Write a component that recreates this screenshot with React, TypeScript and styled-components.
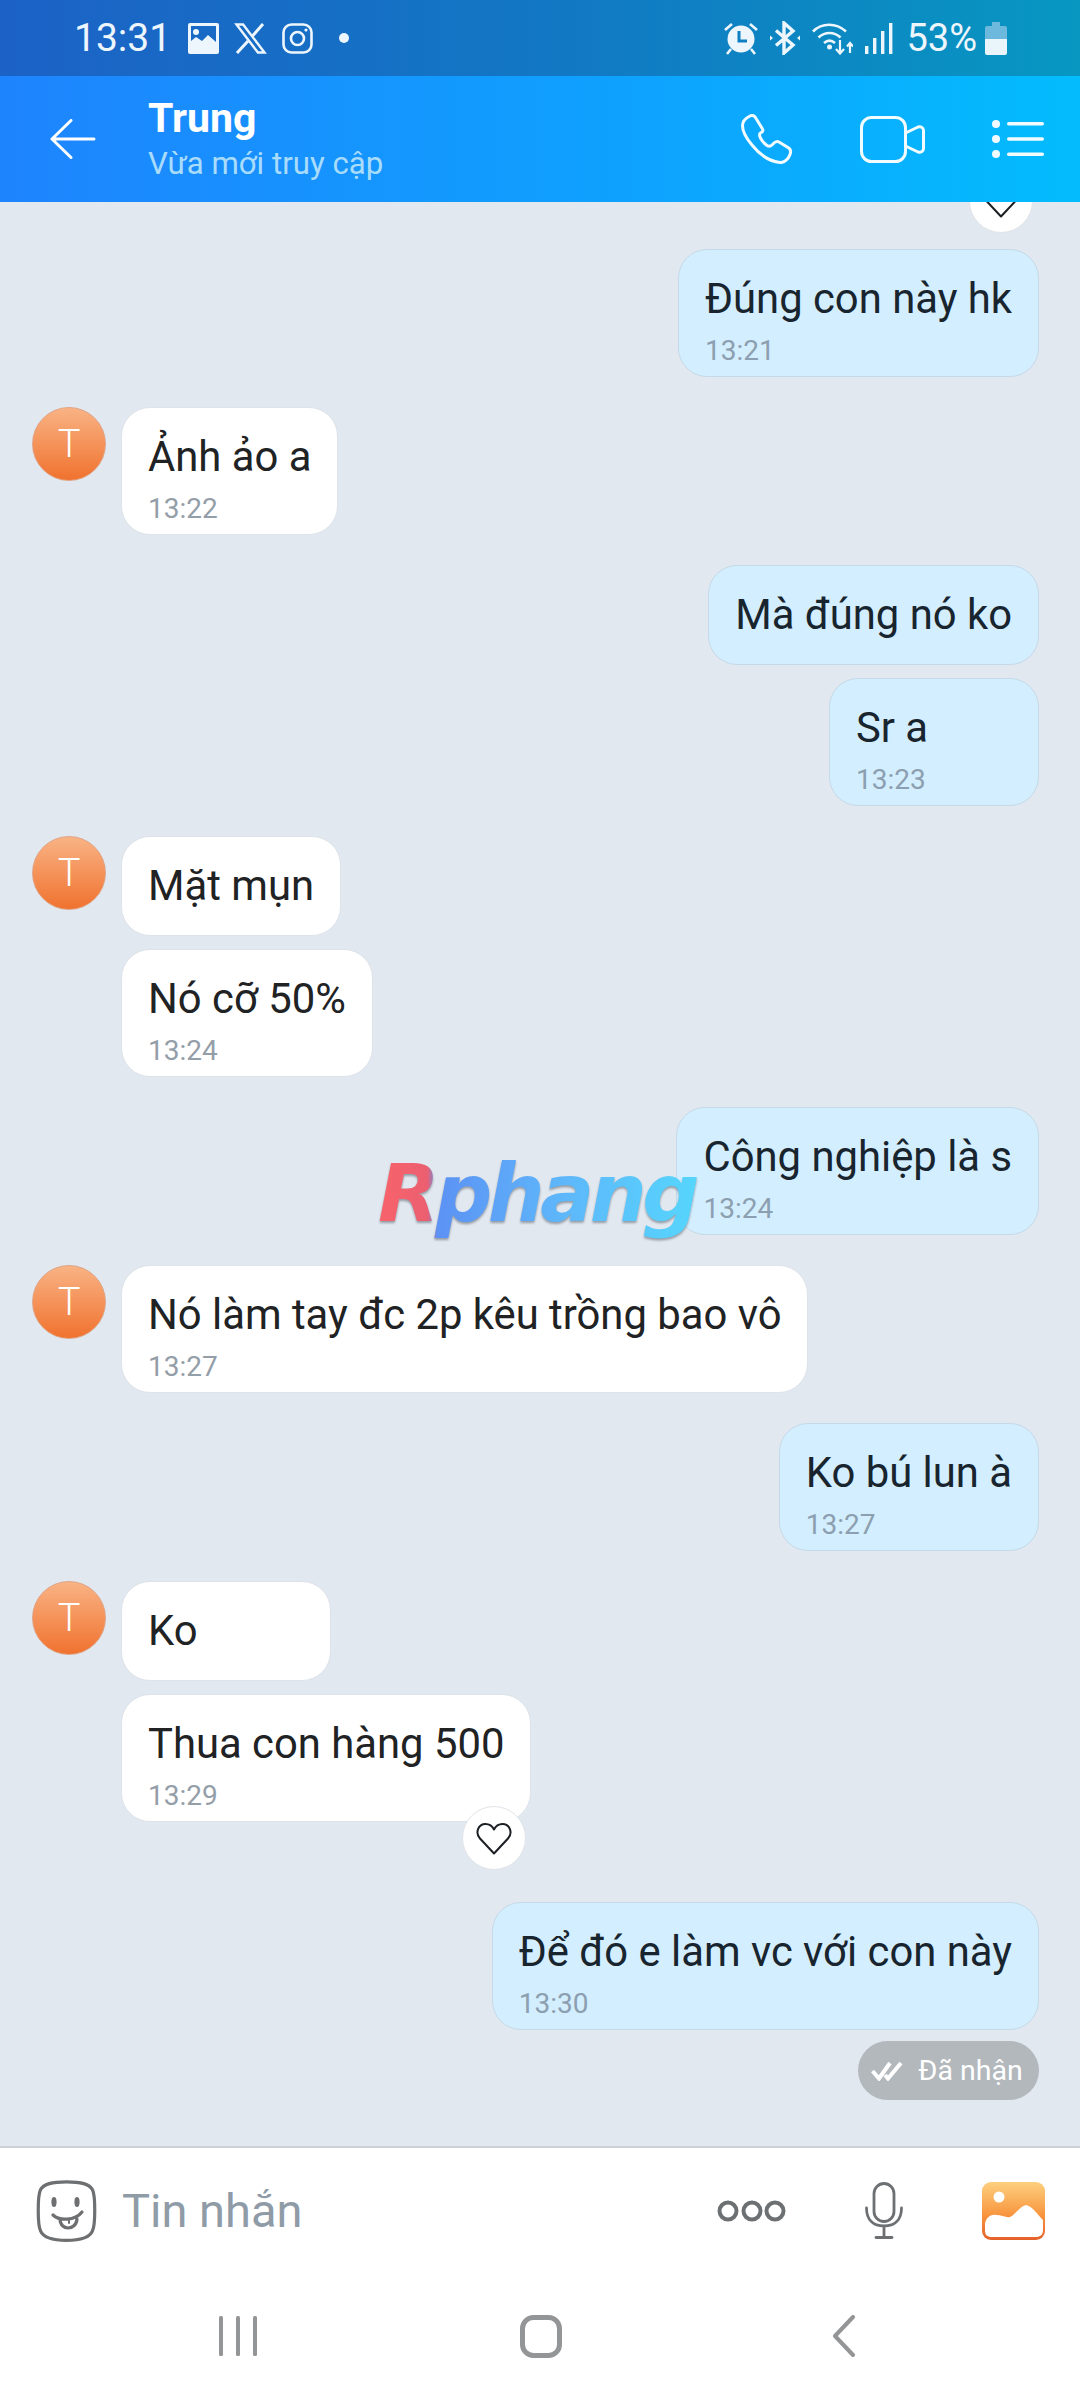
import React from "react";
import styled, { createGlobalStyle } from "styled-components";

interface Message {
  id: number;
  text: string;
  time?: string;
  reaction?: boolean;
}

interface Group {
  id: number;
  mine: boolean;
  messages: Message[];
  delivered?: boolean;
  pushTop?: number;
}

const groups: Group[] = [
  { id: 1, mine: true, messages: [{ id: 1, text: "Đúng con này hk", time: "13:21" }] },
  { id: 2, mine: false, messages: [{ id: 2, text: "Ảnh ảo a", time: "13:22" }] },
  {
    id: 3,
    mine: true,
    messages: [
      { id: 3, text: "Mà đúng nó ko" },
      { id: 4, text: "Sr a", time: "13:23" },
    ],
  },
  {
    id: 4,
    mine: false,
    messages: [
      { id: 5, text: "Mặt mụn" },
      { id: 6, text: "Nó cỡ 50%", time: "13:24" },
    ],
  },
  { id: 5, mine: true, messages: [{ id: 7, text: "Công nghiệp là s", time: "13:24" }] },
  { id: 6, mine: false, messages: [{ id: 8, text: "Nó làm tay đc 2p kêu trồng bao vô", time: "13:27" }] },
  { id: 7, mine: true, messages: [{ id: 9, text: "Ko bú lun à", time: "13:27" }] },
  {
    id: 8,
    mine: false,
    messages: [
      { id: 10, text: "Ko" },
      { id: 11, text: "Thua con hàng 500", time: "13:29", reaction: true },
    ],
  },
  {
    id: 9,
    mine: true,
    pushTop: 50,
    delivered: true,
    messages: [{ id: 12, text: "Để đó e làm vc với con này", time: "13:30" }],
  },
];

const GlobalStyle = createGlobalStyle`
  html, body {
    margin: 0;
    padding: 0;
    background: #fff;
    font-family: Roboto, "Liberation Sans", sans-serif;
  }
  * { box-sizing: border-box; }
`;

const Screen = styled.div`
  width: 1080px;
  height: 2400px;
  display: flex;
  flex-direction: column;
  overflow: hidden;
  background: #fff;
`;

const StatusBar = styled.div`
  height: 76px;
  flex-shrink: 0;
  display: flex;
  align-items: center;
  padding: 0 73px 0 74px;
  background: linear-gradient(90deg, #1c62c6 0%, #1277c4 50%, #0797c1 100%);
  color: #eef6fd;
`;

const StatusTime = styled.span`
  font-size: 39px;
  line-height: 76px;
  margin-right: 17px;
`;

const StatusIcons = styled.div<{ $gap: number }>`
  display: flex;
  align-items: center;
  gap: ${(p) => p.$gap}px;
`;

const StatusDot = styled.span`
  width: 10px;
  height: 10px;
  border-radius: 50%;
  background: #eef6fd;
  margin-left: 26px;
`;

const StatusRight = styled.div`
  margin-left: auto;
  display: flex;
  align-items: center;
  gap: 12px;
`;

const Percent = styled.span`
  font-size: 38px;
  line-height: 76px;
  margin: 0 -4px 0 1px;
`;

const Header = styled.header`
  height: 126px;
  flex-shrink: 0;
  display: flex;
  align-items: center;
  padding: 0 36px 0 50px;
  color: #fff;
  background: linear-gradient(90deg, #1e84fe 0%, #0fa0fe 55%, #03bcfd 100%);
`;

const Peer = styled.div`
  margin-left: 52px;
  display: flex;
  flex-direction: column;
`;

const PeerName = styled.div`
  font-size: 41px;
  line-height: 48px;
  font-weight: 700;
  margin-top: -1px;
`;

const PeerStatus = styled.div`
  font-size: 31.2px;
  line-height: 40px;
  margin-top: 2px;
  color: #a9dcfb;
`;

const HeaderActions = styled.div`
  margin-left: auto;
  display: flex;
  align-items: center;
  gap: 67px;
`;

const Chat = styled.main`
  position: relative;
  flex: 1;
  min-height: 0;
  overflow: hidden;
  display: flex;
  flex-direction: column;
  gap: 30px;
  padding: 47px 41px 0 32px;
  background: #e2e8f0;
`;

const Row = styled.div<{ $mine: boolean; $pushTop?: number }>`
  display: flex;
  gap: 15px;
  justify-content: ${(p) => (p.$mine ? "flex-end" : "flex-start")};
  margin-top: ${(p) => p.$pushTop ?? 0}px;
`;

const Avatar = styled.div`
  width: 74px;
  height: 74px;
  flex-shrink: 0;
  border-radius: 50%;
  display: flex;
  align-items: center;
  justify-content: center;
  color: #fff;
  font-size: 38px;
  font-weight: 300;
  background: linear-gradient(180deg, #f9b384 0%, #f0722f 100%);
  border: 1px solid #e0a485;
`;

const Stack = styled.div<{ $mine: boolean }>`
  display: flex;
  flex-direction: column;
  gap: 13px;
  align-items: ${(p) => (p.$mine ? "flex-end" : "flex-start")};
`;

const Bubble = styled.div<{ $mine: boolean }>`
  position: relative;
  min-width: 210px;
  padding: 25px 26px 11px;
  border-radius: 29px;
  background: ${(p) => (p.$mine ? "#d3eefe" : "#ffffff")};
  border: 1px solid ${(p) => (p.$mine ? "#c5d9e8" : "#dde3e9")};
`;

const BubbleText = styled.div<{ $mine: boolean }>`
  font-size: 41.8px;
  line-height: 48px;
  color: ${(p) => (p.$mine ? "#18242e" : "#202224")};
  white-space: nowrap;
  margin-bottom: 14px;
`;

const BubbleTime = styled.div<{ $mine: boolean }>`
  font-size: 28px;
  line-height: 28px;
  color: ${(p) => (p.$mine ? "#8c9fb0" : "#949ea8")};
`;

const Reaction = styled.div`
  position: absolute;
  right: 4px;
  bottom: -49px;
  width: 64px;
  height: 64px;
  border-radius: 50%;
  background: #fff;
  border: 1px solid #e1e4e8;
  display: flex;
  align-items: center;
  justify-content: center;
`;

const ClippedReaction = styled(Reaction)`
  top: -33px;
  right: 47px;
  bottom: auto;
`;

const DeliveredPill = styled.div`
  height: 59px;
  width: 181px;
  border-radius: 30px;
  background: #b3b8bd;
  color: #fff;
  font-size: 28.5px;
  display: flex;
  align-items: center;
  justify-content: center;
  gap: 15px;
  margin-top: -2px;
  padding-right: 3px;
`;

const Watermark = styled.div`
  position: absolute;
  left: 378px;
  top: 937px;
  font-family: "DejaVu Sans", sans-serif;
  font-size: 80px;
  line-height: 110px;
  font-weight: 700;
  font-style: italic;
  letter-spacing: -4.5px;
  padding-right: 12px;
  color: transparent;
  background: linear-gradient(90deg, #f8636a 0%, #ec5f70 15%, #5c92f4 18%, #5eb6fa 55%, #55d8fd 100%);
  -webkit-background-clip: text;
  background-clip: text;
  filter: drop-shadow(0 2px 1px rgba(70, 80, 90, 0.5));
`;

const Composer = styled.div`
  height: 124px;
  flex-shrink: 0;
  display: flex;
  align-items: center;
  padding: 3px 35px 0 36px;
  background: #fff;
  border-top: 2px solid #ccd1d6;
`;

const Placeholder = styled.span`
  margin-left: 25px;
  font-size: 47px;
  color: #8f9ba6;
`;

const ComposerActions = styled.div`
  margin-left: auto;
  display: flex;
  align-items: center;
  gap: 79px;
`;

const NavBar = styled.nav`
  height: 130px;
  flex-shrink: 0;
  display: grid;
  grid-template-columns: 301px 312px auto;
  align-items: start;
  padding: 45px 0 0 219px;
  background: #fff;
`;

const Svg = styled.svg`
  display: block;
  flex-shrink: 0;
`;

const ImageGlyph = () => (
  <Svg width="31" height="31" viewBox="0 0 31 31">
    <path
      fill="#eef6fd"
      fillRule="evenodd"
      d="M2 0h27a2 2 0 0 1 2 2v27a2 2 0 0 1-2 2H2a2 2 0 0 1-2-2V2a2 2 0 0 1 2-2Zm1 3v15l5-4 6 4 6-6 8 7V3Z"
    />
    <circle cx="8" cy="9" r="3" fill="#eef6fd" />
  </Svg>
);

const XGlyph = () => (
  <Svg width="33" height="31" viewBox="0 0 33 31" fill="none" stroke="#eef6fd">
    <path strokeWidth="2.4" d="M2.5 1.5h6.6l21.4 28h-6.6Z" />
    <path strokeWidth="3" d="M29 1 18.5 13M14 18 3 30" />
  </Svg>
);

const InstagramGlyph = () => (
  <Svg width="31" height="31" viewBox="0 0 31 31" fill="none" stroke="#eef6fd" strokeWidth="2.6">
    <rect x="1.5" y="1.5" width="28" height="28" rx="8" />
    <circle cx="15.5" cy="15.5" r="6.5" />
    <circle cx="24" cy="7" r="1.6" fill="#eef6fd" stroke="none" />
  </Svg>
);

const AlarmGlyph = () => (
  <Svg width="34" height="33" viewBox="0 0 34 33">
    <circle cx="17" cy="17" r="13.5" fill="#eef6fd" />
    <path d="M15 9v10h8" fill="none" stroke="#0f7fc3" strokeWidth="3" />
    <path d="M1 8 8 2M33 8l-7-6M7 27l-4 5M27 27l4 5" stroke="#eef6fd" strokeWidth="2.6" fill="none" />
  </Svg>
);

const BluetoothGlyph = () => (
  <Svg width="30" height="34" viewBox="0 0 30 34" fill="none">
    <path d="M6 9.5 23 24l-9 8V2l9 8L6 24.5" stroke="#eef6fd" strokeWidth="3.4" />
    <path d="M0 14.5 3 17l-3 2.5ZM30 14.5 27 17l3 2.5Z" fill="#eef6fd" />
  </Svg>
);

const WifiGlyph = () => (
  <Svg width="41" height="33" viewBox="0 0 41 33" fill="none" stroke="#eef6fd" strokeWidth="2.6">
    <path d="M1 9.5C10 .5 24 .5 34 9.5M6.5 15.5C13 9.5 22 9.5 28.5 15.5M12 21c3.500-3 7.500-3 11 0" />
    <circle cx="17.500" cy="25" r="2.500" fill="#eef6fd" stroke="none" />
    <path strokeWidth="2.200" d="M28 18v13M24 27l4 4.500 4-4.500M38 31V21M35 24.500l3-3.500 3 3.500" />
  </Svg>
);

const SignalGlyph = () => (
  <Svg width="28" height="31" viewBox="0 0 28 31" fill="#eef6fd">
    <rect x="0" y="23" width="3.400" height="8" />
    <rect x="8" y="15" width="3.400" height="16" />
    <rect x="16" y="8" width="3.400" height="23" />
    <rect x="24" y="0" width="3.400" height="31" />
  </Svg>
);

const BatteryGlyph = () => (
  <Svg width="22" height="33" viewBox="0 0 22 33">
    <path d="M7 0h8v4h5a2 2 0 0 1 2 2v11H0V6a2 2 0 0 1 2-2h5Z" fill="#6cb9dd" />
    <path d="M0 17h22v14a2 2 0 0 1-2 2H2a2 2 0 0 1-2-2Z" fill="#eaf5fb" />
  </Svg>
);

const BackGlyph = () => (
  <Svg width="46" height="40" viewBox="0 0 46 40" fill="none" stroke="#fff" strokeWidth="3" strokeLinecap="round" strokeLinejoin="round">
    <path d="M44 20H2M21 1.500 2 20l19 18.500" />
  </Svg>
);

const PhoneGlyph = () => (
  <Svg width="52" height="50" viewBox="0 0 52 50" fill="none" stroke="#f2fbff" strokeWidth="3">
    <path d="M9 2c2-1 4-.5 5.500 1.500l7 11.500c1 1.500 0 3-2 4-1.500 1-1 3 0 5 1.500 3 3.500 5.500 6.500 7.500 2 1.500 4 .5 5.500-1 2-2.500 4.500-3.500 6.500-2.500l9 5.500c2.500 1.500 3 4.500 2 7-1.500 4.500-6 8.500-10 8-10-1-20-7.500-28-17.500C5 24 1.500 17 1.500 11.500 1.500 7.500 5 4 9 2Z" />
  </Svg>
);

const VideoGlyph = () => (
  <Svg width="65" height="47" viewBox="0 0 65 47" fill="none" stroke="#f2fbff" strokeWidth="3" strokeLinejoin="round">
    <rect x="1.500" y="1.500" width="44" height="44" rx="10" />
    <path d="M45.500 17 58 11c2.500-1 5.500.5 5.500 3.500v18c0 3-3 4.500-5.500 3.500l-12.500-6" />
  </Svg>
);

const ListGlyph = () => (
  <Svg width="52" height="38" viewBox="0 0 52 38" fill="#f2fbff">
    <circle cx="4" cy="4" r="4" />
    <circle cx="4" cy="19" r="4" />
    <circle cx="4" cy="34" r="4" />
    <rect x="15" y="2" width="37" height="3.400" rx="1.700" />
    <rect x="15" y="17.300" width="37" height="3.400" rx="1.700" />
    <rect x="15" y="32.600" width="37" height="3.400" rx="1.700" />
  </Svg>
);

const HeartGlyph = () => (
  <Svg width="36" height="33" viewBox="0 0 36 33" fill="none" stroke="#1b1f24" strokeWidth="2" strokeLinejoin="round">
    <path d="M18 31.500 4 16.500C-1 11 2 2 9.500 2c3.700 0 6.800 2 8.500 5.500C19.700 4 22.800 2 26.500 2 34 2 37 11 32 16.500Z" />
  </Svg>
);

const DoubleCheckGlyph = () => (
  <Svg width="32" height="20" viewBox="0 0 32 20" fill="none" stroke="#fff" strokeWidth="4">
    <path d="M1.500 10 8 17.500 19 2M14 14l3 3.500L30 2" />
  </Svg>
);

const SmileyGlyph = () => (
  <Svg width="61" height="62" viewBox="0 0 61 62" fill="none" stroke="#6d6f71" strokeWidth="3.200" strokeLinecap="round">
    <path d="M30.500 1.800c15 0 23 2 26 8 3 6 3 35 0 41-3 7-12 9.500-26 9.500s-23-2.500-26-9.500c-3-6-3-35 0-41 3-6 11-8 26-8Z" />
    <ellipse cx="18" cy="22" rx="2.600" ry="5" fill="#6d6f71" stroke="none" />
    <ellipse cx="41" cy="22" rx="2.600" ry="5" fill="#6d6f71" stroke="none" />
    <path d="M17 35c6 6 22 6 29-3M24 39c0 12 16 12 17 0" />
    <path d="M33 39v4" strokeWidth="2" />
  </Svg>
);

const DotsGlyph = () => (
  <Svg width="69" height="24" viewBox="0 0 69 24" fill="none" stroke="#6d7072" strokeWidth="4">
    <circle cx="11" cy="12" r="8.500" />
    <circle cx="35" cy="12" r="8.500" />
    <circle cx="58" cy="12" r="8.500" />
  </Svg>
);

const MicGlyph = () => (
  <Svg width="38" height="57" viewBox="0 0 38 57" fill="none" stroke="#6d7072" strokeWidth="2.800" strokeLinecap="round">
    <rect x="9" y="1.500" width="20" height="38" rx="10" />
    <path d="M1.500 26c0 12 7 18 17.500 18s17.500-6 17.500-18M19 44v11M11 55.500h16" />
  </Svg>
);

const GalleryGlyph = () => (
  <Svg width="63" height="58" viewBox="0 0 63 58">
    <defs>
      <linearGradient id="galleryFill" x1="0" y1="0" x2="0" y2="1">
        <stop offset="0" stopColor="#fdd07e" />
        <stop offset="0.6" stopColor="#f8923c" />
        <stop offset="1" stopColor="#e4602a" />
      </linearGradient>
    </defs>
    <rect width="63" height="58" rx="9" fill="url(#galleryFill)" />
    <circle cx="17" cy="15" r="5.500" fill="#fff" />
    <path d="M3 43C3 37 8 32 14 33c6 0 10 3 14 2 5-2 10-11 16-12 6 1 12 10 17 15v10c0 5-3 7-7 7H10c-5 0-7-2-7-7Z" fill="#fff" />
  </Svg>
);

const MenuGlyph = () => (
  <Svg width="38" height="42" viewBox="0 0 38 42" fill="#949596">
    <rect x="0" y="1" width="4" height="40" rx="1.500" />
    <rect x="17" y="1" width="4" height="40" rx="1.500" />
    <rect x="34" y="1" width="4" height="40" rx="1.500" />
  </Svg>
);

const HomeGlyph = () => (
  <Svg width="42" height="43" viewBox="0 0 42 43" fill="none" stroke="#949596" strokeWidth="5">
    <rect x="2.500" y="2.500" width="37" height="38" rx="11" />
  </Svg>
);

const ChevronGlyph = () => (
  <Svg width="24" height="42" viewBox="0 0 24 42" fill="none" stroke="#949596" strokeWidth="4" strokeLinecap="round" strokeLinejoin="round">
    <path d="M21 2 3 21l18 19" />
  </Svg>
);

const App: React.FC = () => {
  return (
    <Screen>
      <GlobalStyle />
      <StatusBar>
        <StatusTime>13:31</StatusTime>
        <StatusIcons $gap={15}>
          <ImageGlyph />
          <XGlyph />
          <InstagramGlyph />
        </StatusIcons>
        <StatusDot />
        <StatusRight>
          <AlarmGlyph />
          <BluetoothGlyph />
          <WifiGlyph />
          <SignalGlyph />
          <Percent>53%</Percent>
          <BatteryGlyph />
        </StatusRight>
      </StatusBar>

      <Header>
        <BackGlyph />
        <Peer>
          <PeerName>Trung</PeerName>
          <PeerStatus>Vừa mới truy cập</PeerStatus>
        </Peer>
        <HeaderActions>
          <PhoneGlyph />
          <VideoGlyph />
          <ListGlyph />
        </HeaderActions>
      </Header>

      <Chat>
        <ClippedReaction>
          <HeartGlyph />
        </ClippedReaction>
        {groups.map((group) => (
          <Row key={group.id} $mine={group.mine} $pushTop={group.pushTop}>
            {!group.mine && <Avatar>T</Avatar>}
            <Stack $mine={group.mine}>
              {group.messages.map((message) => (
                <Bubble key={message.id} $mine={group.mine}>
                  <BubbleText $mine={group.mine}>{message.text}</BubbleText>
                  {message.time && <BubbleTime $mine={group.mine}>{message.time}</BubbleTime>}
                  {message.reaction && (
                    <Reaction>
                      <HeartGlyph />
                    </Reaction>
                  )}
                </Bubble>
              ))}
              {group.delivered && (
                <DeliveredPill>
                  <DoubleCheckGlyph />
                  Đã nhận
                </DeliveredPill>
              )}
            </Stack>
          </Row>
        ))}
        <Watermark>Rphang</Watermark>
      </Chat>

      <Composer>
        <SmileyGlyph />
        <Placeholder>Tin nhắn</Placeholder>
        <ComposerActions>
          <DotsGlyph />
          <MicGlyph />
          <GalleryGlyph />
        </ComposerActions>
      </Composer>

      <NavBar>
        <MenuGlyph />
        <HomeGlyph />
        <ChevronGlyph />
      </NavBar>
    </Screen>
  );
};

export default App;
